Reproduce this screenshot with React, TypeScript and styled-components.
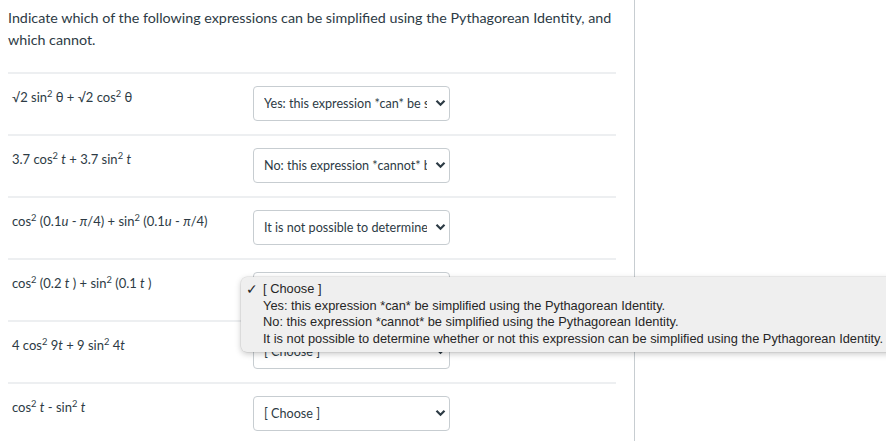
import React from "react";
import styled, { createGlobalStyle } from "styled-components";

const GlobalStyle = createGlobalStyle`
  html, body {
    margin: 0;
    padding: 0;
    background: #fff;
    font-family: Lato, "Noto Sans", sans-serif;
    color: #2d3b45;
    overflow: hidden;
  }
`;

const Page = styled.div`
  display: flex;
  min-height: 100vh;
`;

const Main = styled.div`
  width: 635px;
  padding: 7px 18px 0 8px;
  box-sizing: border-box;
  border-right: 1px solid #c7cdd1;
`;

const Prompt = styled.p`
  margin: 0 -12px 21px 0;
  font-size: 14.3px;
  line-height: 22px;
`;

const Row = styled.div`
  position: relative;
  display: flex;
  align-items: flex-start;
  border-top: 2px solid #edeff1;
  padding: 12px 0 13px;
  height: 62px;
  box-sizing: border-box;
`;

const Expression = styled.div`
  width: 245px;
  box-sizing: border-box;
  padding: 2px 0 0 4px;
  font-size: 13px;
  line-height: 19px;
  white-space: nowrap;

  sup {
    font-size: 0.72em;
    line-height: 0;
    vertical-align: 0.5em;
  }
`;

const V = styled.i`
  font-style: italic;
`;

const SelectWrap = styled.div`
  position: relative;
  width: 197px;
  height: 35px;
`;

const Select = styled.select`
  appearance: none;
  -webkit-appearance: none;
  width: 100%;
  height: 100%;
  margin: 0;
  padding: 0 22px 0 10px;
  border: 1px solid #c7cdd1;
  border-radius: 4px;
  background: #fff;
  color: #2d3b45;
  font-family: Lato, "Noto Sans", sans-serif;
  font-size: 12.6px;
  outline: none;
`;

const Chevron = styled.svg`
  position: absolute;
  right: 4px;
  top: 13px;
  width: 11px;
  height: 8px;
  pointer-events: none;
`;

const Menu = styled.div`
  position: absolute;
  left: -12px;
  top: 5px;
  z-index: 5;
  padding: 4px 0;
  width: 660px;
  background: #efefef;
  border-radius: 6px;
  box-shadow: 0 2px 6px rgba(0, 0, 0, 0.22), 0 0 0 0.5px rgba(0, 0, 0, 0.1);
  font-family: "Liberation Sans", Arial, sans-serif;
  font-size: 12.84px;
  color: #262626;
`;

const MenuItem = styled.div`
  position: relative;
  height: 16.7px;
  line-height: 16.7px;
  padding-left: 22px;
  white-space: nowrap;
`;

const Check = styled.span`
  position: absolute;
  left: 5px;
  top: 0;
  font-size: 14px;
`;

const CHOOSE = "[ Choose ]";
const YES = "Yes: this expression *can* be simplified using the Pythagorean Identity.";
const NO = "No: this expression *cannot* be simplified using the Pythagorean Identity.";
const MAYBE =
  "It is not possible to determine whether or not this expression can be simplified using the Pythagorean Identity.";
const OPTIONS = [CHOOSE, YES, NO, MAYBE];

type Item = { expr: React.ReactNode; value: string; open?: boolean };

const items: Item[] = [
  {
    expr: (
      <>
        √2 sin<sup>2</sup> θ + √2 cos<sup>2</sup> θ
      </>
    ),
    value: YES,
  },
  {
    expr: (
      <>
        3.7 cos<sup>2</sup> <V>t</V> + 3.7 sin<sup>2</sup> <V>t</V>
      </>
    ),
    value: NO,
  },
  {
    expr: (
      <>
        cos<sup>2</sup> (0.1<V>u</V> - <V>π</V>/4) + sin<sup>2</sup> (0.1<V>u</V> - <V>π</V>/4)
      </>
    ),
    value: MAYBE,
  },
  {
    expr: (
      <>
        cos<sup>2</sup> (0.2 <V>t</V> ) + sin<sup>2</sup> (0.1 <V>t</V> )
      </>
    ),
    value: CHOOSE,
    open: true,
  },
  {
    expr: (
      <>
        4 cos<sup>2</sup> 9<V>t</V> + 9 sin<sup>2</sup> 4<V>t</V>
      </>
    ),
    value: CHOOSE,
  },
  {
    expr: (
      <>
        cos<sup>2</sup> <V>t</V> - sin<sup>2</sup> <V>t</V>
      </>
    ),
    value: CHOOSE,
  },
];

const Dropdown = ({ value, open }: { value: string; open?: boolean }) => (
  <SelectWrap>
    <Select defaultValue={value}>
      {OPTIONS.map((o) => (
        <option key={o} value={o}>
          {o}
        </option>
      ))}
    </Select>
    <Chevron viewBox="0 0 11 8">
      <path d="M1.5 1.8 L5.5 5.8 L9.5 1.8" fill="none" stroke="#2d3b45" strokeWidth="2.2" />
    </Chevron>
    {open && (
      <Menu>
        {OPTIONS.map((o) => (
          <MenuItem key={o}>
            {o === value && <Check>✓</Check>}
            {o}
          </MenuItem>
        ))}
      </Menu>
    )}
  </SelectWrap>
);

export default function App() {
  return (
    <Page>
      <GlobalStyle />
      <Main>
        <Prompt>
          Indicate which of the following expressions can be simplified using the Pythagorean
          Identity, and which cannot.
        </Prompt>
        {items.map((it, i) => (
          <Row key={i}>
            <Expression>{it.expr}</Expression>
            <Dropdown value={it.value} open={it.open} />
          </Row>
        ))}
      </Main>
    </Page>
  );
}
